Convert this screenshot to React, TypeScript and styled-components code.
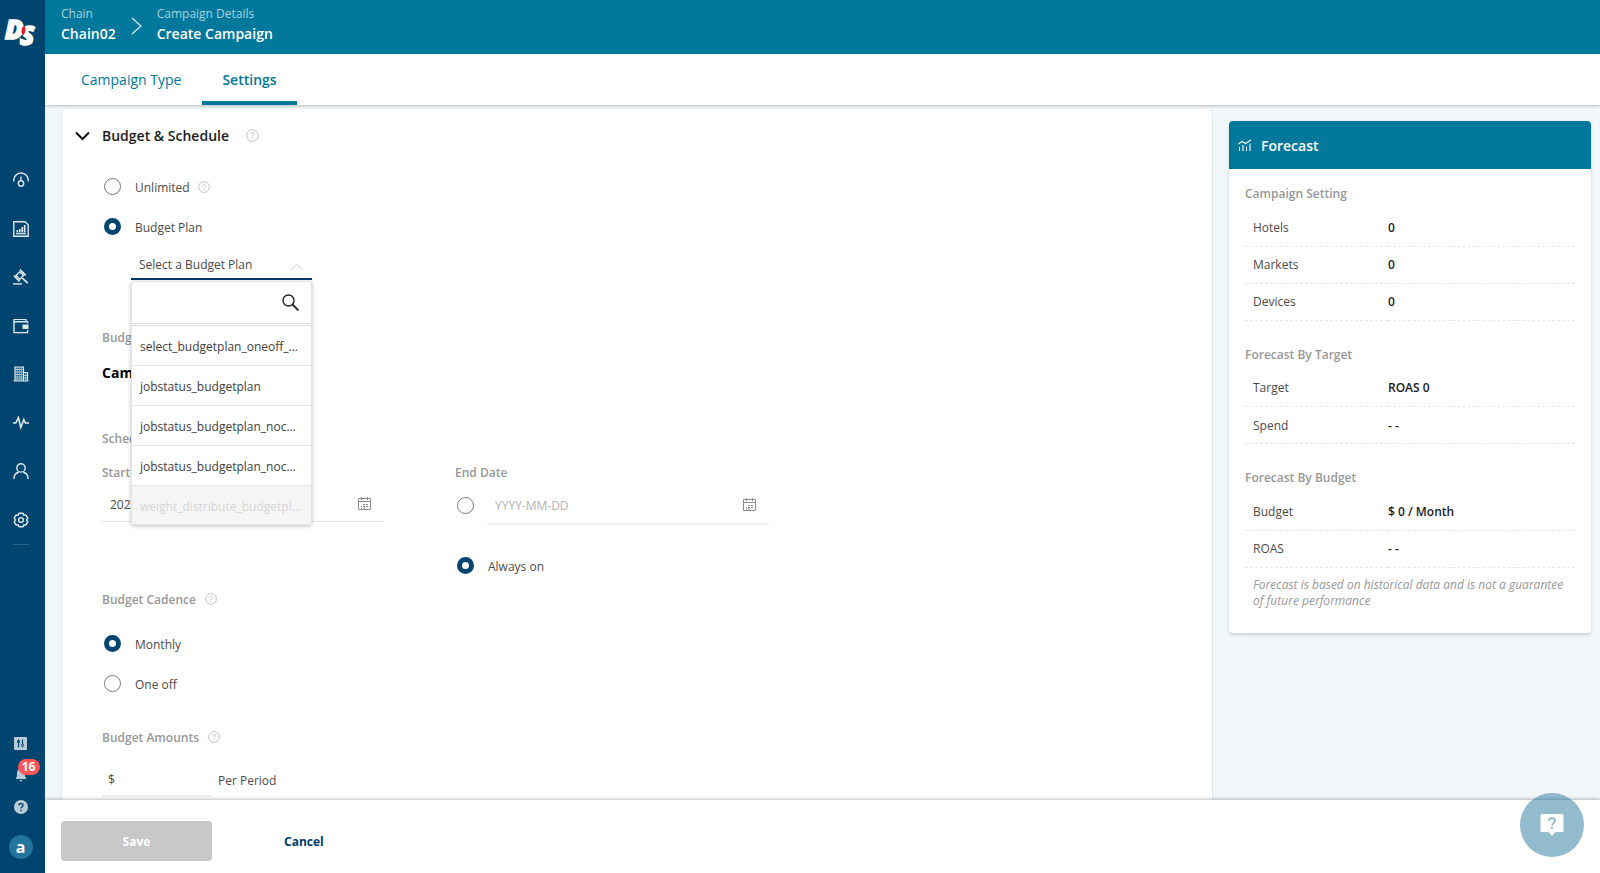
import React, { useState } from "react";
import styled, { createGlobalStyle, css } from "styled-components";

const color = {
  navy: "#00456f",
  teal: "#00789c",
  page: "#f1f6f9",
  line: "#e6e6e6",
  muted: "#979797",
  text: "#4a4a4a",
  dark: "#1c1c1c",
};

const GlobalStyle = createGlobalStyle`
  * { box-sizing: border-box; }
  body { margin: 0; background: ${color.page}; }
  body, button, input, select {
    font-family: "Open Sans", "Noto Sans", sans-serif;
    font-size: 12px;
    color: ${color.text};
  }
  button { border: 0; padding: 0; background: none; cursor: pointer; }
  a { text-decoration: none; color: inherit; }
  svg { display: block; }
  h1, h2, h3, p { margin: 0; }
`;

const Shell = styled.div`
  display: flex;
  height: 100vh;
  overflow: hidden;
`;

/* ---------- side bar ---------- */

const Sidebar = styled.nav`
  flex: none;
  width: 45px;
  display: flex;
  flex-direction: column;
  align-items: center;
  padding: 14px 4px 14px 0;
  background: ${color.navy};
  color: #dfe8ee;
`;

const LogoLink = styled.a`
  display: block;
  width: 41px;
`;

const NavList = styled.div`
  display: grid;
  grid-auto-rows: 1fr;
  width: 16px;
  height: 389px;
  margin-top: 102px;
  border-bottom: 1px solid #2a6489;
`;

const NavLink = styled.a`
  display: flex;
  align-items: center;
  justify-content: center;
`;

const UtilityList = styled.div`
  display: flex;
  flex-direction: column;
  align-items: center;
  gap: 16px;
  margin-top: auto;
  color: #b9cbd8;
`;

const IconButton = styled.button`
  position: relative;
  display: grid;
  place-items: center;
  height: 16px;
  color: inherit;
`;

const Badge = styled.span`
  position: absolute;
  left: 3px;
  top: -8px;
  min-width: 22px;
  height: 16px;
  border-radius: 8px;
  background: #ff5757;
  color: #fff;
  font-size: 12px;
  font-weight: 700;
  line-height: 16px;
  text-align: center;
`;

const Avatar = styled.button`
  width: 24px;
  height: 24px;
  margin-top: 4px;
  border-radius: 50%;
  background: #23759d;
  color: #fff;
  font-size: 16px;
  font-weight: 700;
  line-height: 22px;
`;

/* ---------- top ---------- */

const Main = styled.div`
  flex: 1;
  min-width: 0;
  display: flex;
  flex-direction: column;
`;

const TopBar = styled.header`
  flex: none;
  display: flex;
  align-items: center;
  height: 54px;
  padding: 0 16px 6px;
  background: ${color.teal};
  color: #fff;
`;

const Crumb = styled.a`
  display: flex;
  flex-direction: column;
`;

const CrumbLabel = styled.span`
  font-size: 12px;
  line-height: 20px;
  color: #a9d1de;
`;

const CrumbName = styled.span`
  font-size: 14px;
  font-weight: 600;
  line-height: 20px;
`;

const CrumbArrow = styled.svg`
  margin: 4px 15px 0;
`;

const TabBar = styled.div`
  position: relative;
  z-index: 1;
  flex: none;
  display: flex;
  gap: 1px;
  height: 51px;
  padding-left: 16px;
  background: #fff;
  box-shadow: 0 1px 3px rgba(0, 0, 0, 0.25);
`;

const Tab = styled.button<{ $active?: boolean }>`
  padding: 4px 20px 0;
  border-bottom: 4px solid ${(p) => (p.$active ? color.teal : "transparent")};
  color: ${color.teal};
  font-size: 14px;
  font-weight: ${(p) => (p.$active ? 600 : 400)};
`;

/* ---------- content ---------- */

const Body = styled.main`
  flex: 1;
  min-height: 0;
  overflow: hidden;
  display: flex;
  align-items: flex-start;
  gap: 16px;
  padding: 4px 9px 0 16px;
  background: ${color.page};
`;

const Card = styled.section`
  flex: 1;
  min-width: 0;
  padding: 0 40px 40px;
  border: 1px solid #e3e8ec;
  border-width: 0 1px;
  border-radius: 6px;
  background: #fff;
`;

const CardHeader = styled.div`
  display: flex;
  align-items: center;
  height: 53px;
  margin: 0 0 5px -27px;
`;

const CardTitle = styled.h1`
  margin: 0 17px 0 12px;
  color: ${color.dark};
  font-size: 14px;
  font-weight: 600;
`;

const RadioLabel = styled.label`
  display: flex;
  align-items: center;
  gap: 14px;
  height: 40px;
`;

const RadioRow = styled.div`
  display: flex;
  align-items: center;
  gap: 8px;
`;

const Radio = styled.input.attrs({ type: "radio" })`
  appearance: none;
  flex: none;
  width: 17px;
  height: 17px;
  margin: 0 0 2px 2px;
  border: 1px solid #777;
  border-radius: 50%;
  background: #fff;
  &:checked {
    border: 5px solid ${color.navy};
  }
`;

const FieldTitle = styled.h2<{ $gap: number }>`
  display: flex;
  align-items: center;
  gap: 9px;
  height: 18px;
  margin-top: ${(p) => p.$gap}px;
  color: ${color.muted};
  font-size: 12px;
  font-weight: 600;
`;

const PlanName = styled.p`
  height: 18px;
  margin-top: 18px;
  color: #000;
  font-size: 14px;
  font-weight: 700;
  line-height: 18px;
`;

const Picker = styled.div`
  position: relative;
  width: 181px;
  margin-left: 29px;
`;

const PickerSelect = styled.select`
  appearance: none;
  display: block;
  width: 100%;
  height: 33px;
  padding: 4px 8px 0;
  border: 0;
  border-bottom: 2px solid #003a70;
  border-radius: 0;
  outline: 0;
  background: transparent;
`;

const PickerArrow = styled.svg`
  position: absolute;
  right: 9px;
  top: 16px;
  pointer-events: none;
`;

const Menu = styled.div`
  position: absolute;
  z-index: 2;
  top: 34px;
  left: 0;
  width: 100%;
  border: 1px solid #e4e4e4;
  border-radius: 3px;
  background: #fff;
  box-shadow: 0 1px 4px rgba(0, 0, 0, 0.25);
`;

const MenuSearch = styled.label`
  display: flex;
  align-items: center;
  height: 44px;
  padding-right: 12px;
  border-bottom: 3px double #dcdcdc;
`;

const SearchInput = styled.input`
  flex: 1;
  min-width: 0;
  height: 100%;
  padding: 0 8px;
  border: 0;
  outline: 0;
  background: transparent;
`;

const MenuItem = styled.button`
  display: block;
  width: 100%;
  height: 40px;
  padding: 2px 8px 0;
  border-bottom: 1px solid ${color.line};
  color: #404040;
  text-align: left;
  overflow: hidden;
  white-space: nowrap;
  text-overflow: ellipsis;
  &:disabled {
    height: 38px;
    border-bottom: 0;
    background: #f5f5f5;
    color: #d6d6d6;
  }
`;

const ScheduleGrid = styled.div`
  display: grid;
  grid-template-columns: 282px 314px;
  column-gap: 71px;
  margin-bottom: -14px;
`;

const Field = styled.div<{ $indent?: boolean }>`
  display: flex;
  align-items: center;
  flex: 1;
  padding-right: 13px;
  height: ${(p) => (p.$indent ? 38 : 35)}px;
  border-bottom: 1px solid ${color.line};
  ${(p) =>
    p.$indent &&
    css`
      border-bottom-width: 2px;
      border-color: #efefef;
    `}
`;

const DateInput = styled.input.attrs({ type: "text" })`
  flex: 1;
  min-width: 0;
  padding: 0 8px;
  border: 0;
  outline: 0;
  background: transparent;
  &::placeholder {
    color: #b3b3b3;
  }
`;

const DateRow = styled.div`
  display: flex;
  align-items: center;
  gap: 13px;
  margin: 5px 0 21px;
`;

const FieldLabel = styled.label`
  display: block;
  height: 18px;
  margin-top: 17px;
  color: ${color.muted};
  font-weight: 600;
  line-height: 18px;
`;

const Options = styled.div`
  margin: 16px 0 0;
`;

const AmountLabel = styled.label`
  display: flex;
  align-items: center;
  gap: 6px;
  margin-top: 18px;
`;

const AmountField = styled.span`
  display: flex;
  align-items: center;
  width: 110px;
  height: 33px;
  padding-left: 6px;
  border-bottom: 2px solid #efefef;
`;

const AmountInput = styled.input`
  width: 80px;
  border: 0;
  outline: 0;
  background: transparent;
`;

/* ---------- forecast ---------- */

const Forecast = styled.aside`
  flex: none;
  width: 362px;
  margin-top: 12px;
  border-radius: 4px;
  background: #fff;
  box-shadow: 0 2px 3px rgba(0, 0, 0, 0.16);
`;

const ForecastHeader = styled.div`
  display: flex;
  align-items: center;
  gap: 9px;
  height: 48px;
  padding-left: 9px;
  border-radius: 4px 4px 0 0;
  background: ${color.teal};
  color: #fff;
`;

const ForecastTitle = styled.h2`
  font-size: 14px;
  font-weight: 600;
`;

const ForecastBody = styled.div`
  display: grid;
  gap: 19px;
  padding: 10px 16px 24px;
`;

const Figures = styled.table`
  width: 100%;
  border-collapse: collapse;
  table-layout: fixed;

  caption {
    height: 30px;
    color: ${color.muted};
    font-weight: 600;
    line-height: 30px;
    text-align: left;
  }
  th,
  td {
    height: 37px;
    padding: 0;
    border-bottom: 1px dashed ${color.line};
    text-align: left;
  }
  th {
    width: 143px;
    padding-left: 8px;
    font-weight: 400;
  }
  td {
    color: ${color.dark};
    font-weight: 600;
  }
`;

const Note = styled.p`
  margin-top: -10px;
  padding: 0 8px;
  color: ${color.muted};
  font-style: italic;
  line-height: 16px;
`;

/* ---------- footer ---------- */

const Footer = styled.footer`
  position: relative;
  z-index: 3;
  flex: none;
  display: flex;
  align-items: flex-start;
  gap: 72px;
  height: 73px;
  padding: 21px 16px 0;
  background: #fff;
  box-shadow: 0 -1px 3px rgba(0, 0, 0, 0.25);
`;

const SaveButton = styled.button`
  width: 151px;
  height: 40px;
  border-radius: 4px;
  background: #c8c8c8;
  color: #fff;
  font-weight: 700;
`;

const CancelButton = styled.button`
  height: 40px;
  color: #003a6b;
  font-weight: 700;
`;

const ChatButton = styled.button`
  position: fixed;
  z-index: 4;
  right: 16px;
  bottom: 16px;
  display: grid;
  place-items: center;
  width: 64px;
  height: 64px;
  border-radius: 50%;
  background: rgba(37, 120, 158, 0.5);
`;

/* ---------- icons ---------- */

const Logo = () => (
  <svg width="41" height="40" viewBox="0 0 41 40" role="img" aria-label="DS">
    <g fontFamily="Open Sans" fontWeight="800" fontStyle="italic" fill="#fff" stroke="#fff" strokeWidth="1.6">
      <text x="5" y="25" fontSize="27">D</text>
      <text x="20" y="31" fontSize="26">S</text>
    </g>
    <path d="M24.500 12c-3.200.6-4 6.800-1.500 9.200 2.500-1.600 3.200-6.800 1.500-9.200z" fill="#e8171f" />
  </svg>
);

const NavSvg = ({ children }: { children: React.ReactNode }) => (
  <svg width="16" height="16" viewBox="0 0 16 16" fill="none" stroke="currentColor" strokeWidth="1.4">
    {children}
  </svg>
);

const navItems: { name: string; icon: React.ReactNode }[] = [
  {
    name: "Dashboard",
    icon: (
      <>
        <path d="M.9 9.400a7.200 7.200 0 1 1 14.200 0" />
        <circle cx="8" cy="11.500" r="2.700" />
        <path d="M8 4.500v4.300" />
      </>
    ),
  },
  {
    name: "Reports",
    icon: (
      <>
        <path d="M.8.8h11.400l3 3v11.400H.8z" />
        <path d="M3 12.700h10" strokeWidth="1.200" />
        <path d="M4.300 9v2.500M6.800 8v3.500M9.300 6v5.500M11.700 4v7.500" strokeWidth="1.700" />
      </>
    ),
  },
  {
    name: "Bidding",
    icon: (
      <>
        <path d="M6.800 2.800l3.700 3.700-3.700 3.700-3.700-3.700z" />
        <path d="M7 .6l5.700 5.700M.9 6.700l5.700 5.700M9.300 9.200l5.500 5" strokeWidth="1.700" />
        <path d="M0 14.900h9" />
      </>
    ),
  },
  {
    name: "Wallet",
    icon: (
      <>
        <path d="M14.600 5.500V3.800H1V14.600h13.600V12" />
        <path d="M1 4V1.500h12v2" strokeWidth="1.200" />
        <rect x="9.500" y="6.500" width="6" height="4.500" fill="currentColor" stroke="none" />
      </>
    ),
  },
  {
    name: "Hotels",
    icon: (
      <>
        <path d="M2 15V1h8.500v14M11 6.500h3.500V15M.5 15h15" strokeWidth="1.200" />
        <path d="M4.100 1v14M6.200 1v14M8.300 1v14M2 3.500h8.500M2 6h8.500M2 8.500h8.500M2 11h8.500M2 13h8.500M12.700 7v8M11 9.500h3.500M11 12h3.500" strokeWidth="0.7" />
      </>
    ),
  },
  {
    name: "Activity",
    icon: <path d="M0 8h2.800L5.400 2.600 7.800 12.600l3-8L12.400 8H16" strokeWidth="1.600" />,
  },
  {
    name: "Users",
    icon: (
      <>
        <circle cx="8" cy="4.900" r="4.200" />
        <path d="M.9 16c0-4.200 2.600-6.300 5-7M15.100 16c0-4.200-2.600-6.300-5-7" />
      </>
    ),
  },
  {
    name: "Settings",
    icon: (
      <>
        <path d="M5.200 3.200 6 1.200h4l.8 2 2-.3 2 3.300L13.500 8l1.300 1.800-2 3.300-2-.3-.8 2H6l-.8-2-2 .3-2-3.300L2.500 8 1.200 6.200l2-3.300z" strokeLinejoin="round" />
        <circle cx="8" cy="8" r="2.400" />
      </>
    ),
  },
];

const Help = ({ size = 12 }: { size?: number }) => (
  <svg width={size} height={size} viewBox="0 0 12 12" fill="none" stroke="#bdbdbd" strokeWidth="0.9" role="img" aria-label="Help">
    <circle cx="6" cy="6" r="5.400" />
    <path d="M4.500 4.700c0-2 3-2 3 0 0 1.100-1.500 1.100-1.500 2.500M6 8.100v1" />
  </svg>
);

const Calendar = () => (
  <svg width="13" height="14" viewBox="0 0 13 14" fill="none" stroke="#8c8c8c" aria-hidden="true">
    <path d="M.5 1.500h12v11H.5zM.5 4.500h12M3.500 0v3M9.500 0v3" />
    <path d="M5 7.500h2M8 7.500h2M3 9.500h1M5 9.500h2M8 9.500h2M3 11h1M5 11h2" />
  </svg>
);

/* ---------- page ---------- */

const plans = [
  { name: "select_budgetplan_oneoff_monthly" },
  { name: "jobstatus_budgetplan" },
  { name: "jobstatus_budgetplan_nochange" },
  { name: "jobstatus_budgetplan_nocweight" },
  { name: "weight_distribute_budgetplan_all", disabled: true },
];

const forecast = [
  { title: "Campaign Setting", rows: [["Hotels", "0"], ["Markets", "0"], ["Devices", "0"]] },
  { title: "Forecast By Target", rows: [["Target", "ROAS 0"], ["Spend", "- -"]] },
  { title: "Forecast By Budget", rows: [["Budget", "$ 0 / Month"], ["ROAS", "- -"]] },
];

export default function App() {
  const [open, setOpen] = useState(true);
  const [plan, setPlan] = useState("");

  return (
    <>
      <GlobalStyle />
      <Shell>
        <Sidebar aria-label="Main">
          <LogoLink href="#home"><Logo /></LogoLink>
          <NavList>
            {navItems.map((item) => (
              <NavLink key={item.name} href={`#${item.name.toLowerCase()}`} aria-label={item.name}>
                <NavSvg>{item.icon}</NavSvg>
              </NavLink>
            ))}
          </NavList>
          <UtilityList>
            <IconButton aria-label="Controls">
              <svg width="13" height="13" viewBox="0 0 13 13">
                <rect width="13" height="13" rx="1" fill="currentColor" />
                <path d="M4.500 2.500v8M8.500 2.500v8" stroke={color.navy} strokeWidth="1.200" />
                <circle cx="4.500" cy="4.500" r="1.500" fill={color.navy} />
                <circle cx="8.500" cy="8.300" r="1.200" fill="#b9cbd8" stroke={color.navy} />
              </svg>
            </IconButton>
            <IconButton aria-label="Notifications">
              <svg width="12" height="14" viewBox="0 0 12 14" fill="currentColor">
                <path d="M6 0a1 1 0 0 1 1 1c2 .5 3 2 3 4v3.500L11.200 10v1H.8v-1L2 8.500V5c0-2 1-3.500 3-4a1 1 0 0 1 1-1zM4.600 12h2.800a1.400 1.400 0 0 1-2.800 0z" />
              </svg>
              <Badge>16</Badge>
            </IconButton>
            <IconButton aria-label="Help">
              <svg width="14" height="14" viewBox="0 0 14 14" fill="none">
                <circle cx="7" cy="7" r="7" fill="currentColor" />
                <path d="M5 5.400c0-2.500 4-2.500 4 0 0 1.400-2 1.500-2 3.100M7 9.700v1.500" stroke={color.navy} strokeWidth="1.400" />
              </svg>
            </IconButton>
            <Avatar aria-label="Account">a</Avatar>
          </UtilityList>
        </Sidebar>

        <Main>
          <TopBar>
            <Crumb href="#chain">
              <CrumbLabel>Chain</CrumbLabel>
              <CrumbName>Chain02</CrumbName>
            </Crumb>
            <CrumbArrow width="11" height="18" viewBox="0 0 11 18" fill="none" stroke="#c3dfe8" strokeWidth="1.500" aria-hidden="true">
              <path d="M1 1l9 8-9 8" />
            </CrumbArrow>
            <Crumb href="#campaign">
              <CrumbLabel>Campaign Details</CrumbLabel>
              <CrumbName>Create Campaign</CrumbName>
            </Crumb>
          </TopBar>

          <TabBar role="tablist">
            <Tab role="tab" aria-selected={false}>Campaign Type</Tab>
            <Tab role="tab" aria-selected $active>Settings</Tab>
          </TabBar>

          <Body>
            <Card>
              <CardHeader>
                <svg width="15" height="10" viewBox="0 0 15 10" fill="none" stroke="#111" strokeWidth="2" aria-hidden="true">
                  <path d="M1 1.500l6.500 6.500L14 1.500" />
                </svg>
                <CardTitle>Budget &amp; Schedule</CardTitle>
                <Help size={13} />
              </CardHeader>

              <RadioRow>
                <RadioLabel><Radio name="budget" />Unlimited</RadioLabel>
                <Help />
              </RadioRow>
              <RadioLabel><Radio name="budget" defaultChecked />Budget Plan</RadioLabel>

              <Picker>
                <PickerSelect
                  aria-label="Budget plan"
                  value={plan}
                  onChange={(e) => setPlan(e.target.value)}
                  onMouseDown={(e) => {
                    e.preventDefault();
                    setOpen(!open);
                  }}
                >
                  <option value="">Select a Budget Plan</option>
                  {plans.map((p) => (
                    <option key={p.name} value={p.name} disabled={p.disabled}>{p.name}</option>
                  ))}
                </PickerSelect>
                <PickerArrow width="13" height="8" viewBox="0 0 13 8" fill="none" stroke="#d0d0d0" aria-hidden="true">
                  <path d="M.5 7.200l6-6 6 6" />
                </PickerArrow>
                {open && (
                  <Menu>
                    <MenuSearch>
                      <SearchInput type="text" aria-label="Search plans" />
                      <svg width="17" height="17" viewBox="0 0 17 17" fill="none" stroke="#222" strokeWidth="1.400" aria-hidden="true">
                        <circle cx="6.500" cy="6.500" r="5.500" />
                        <path d="M10.500 10.500l6 6" strokeWidth="1.800" />
                      </svg>
                    </MenuSearch>
                    {plans.map((p) => (
                      <MenuItem
                        key={p.name}
                        disabled={p.disabled}
                        onClick={() => {
                          setPlan(p.name);
                          setOpen(false);
                        }}
                      >
                        {p.name}
                      </MenuItem>
                    ))}
                  </Menu>
                )}
              </Picker>

              <FieldTitle $gap={48}>Budget</FieldTitle>
              <PlanName>Campaign</PlanName>

              <FieldTitle $gap={47}>Schedule</FieldTitle>
              <ScheduleGrid>
                <div>
                  <FieldLabel htmlFor="start">Start Date</FieldLabel>
                  <DateRow>
                    <Field>
                      <DateInput id="start" defaultValue="2023-01-01" />
                      <Calendar />
                    </Field>
                  </DateRow>
                </div>
                <div>
                  <FieldLabel htmlFor="end">End Date</FieldLabel>
                  <DateRow>
                    <Radio name="end" aria-label="Fixed end date" />
                    <Field $indent>
                      <DateInput id="end" placeholder="YYYY-MM-DD" />
                      <Calendar />
                    </Field>
                  </DateRow>
                  <RadioLabel><Radio name="end" defaultChecked />Always on</RadioLabel>
                </div>
              </ScheduleGrid>

              <FieldTitle $gap={18}>Budget Cadence <Help /></FieldTitle>
              <Options>
                <RadioLabel><Radio name="cadence" defaultChecked />Monthly</RadioLabel>
                <RadioLabel><Radio name="cadence" />One off</RadioLabel>
              </Options>

              <FieldTitle $gap={24}>Budget Amounts <Help /></FieldTitle>
              <AmountLabel>
                <AmountField>$<AmountInput type="text" aria-label="Amount" /></AmountField>
                Per Period
              </AmountLabel>
            </Card>

            <Forecast>
              <ForecastHeader>
                <svg width="14" height="13" viewBox="0 0 14 13" fill="none" stroke="#fff" strokeWidth="1.100" aria-hidden="true">
                  <path d="M.5 5L4 2.500l3.500 2L13 1" />
                  <path d="M1.500 8v4M5 6v6M8.500 7.500V12M12 4.500V12" />
                </svg>
                <ForecastTitle>Forecast</ForecastTitle>
              </ForecastHeader>
              <ForecastBody>
                {forecast.map((group) => (
                  <Figures key={group.title}>
                    <caption>{group.title}</caption>
                    <tbody>
                      {group.rows.map(([label, value]) => (
                        <tr key={label}>
                          <th scope="row">{label}</th>
                          <td>{value}</td>
                        </tr>
                      ))}
                    </tbody>
                  </Figures>
                ))}
                <Note>Forecast is based on historical data and is not a guarantee of future performance</Note>
              </ForecastBody>
            </Forecast>
          </Body>

          <Footer>
            <SaveButton disabled>Save</SaveButton>
            <CancelButton>Cancel</CancelButton>
          </Footer>
        </Main>
      </Shell>

      <ChatButton aria-label="Open support chat">
        <svg width="24" height="24" viewBox="0 0 24 24" fill="none">
          <path d="M2 1h20a1.500 1.500 0 0 1 1.500 1.500v15A1.500 1.500 0 0 1 22 19h-6.500L12 23l-3.500-4H2a1.500 1.500 0 0 1-1.500-1.500v-15A1.500 1.500 0 0 1 2 1z" fill="#fff" />
          <path d="M9 7.800c0-3.900 6-3.900 6 0 0 2.200-3 2.300-3 5M12 14v2" stroke="#7fb0c8" strokeWidth="1.500" />
        </svg>
      </ChatButton>
    </>
  );
}
